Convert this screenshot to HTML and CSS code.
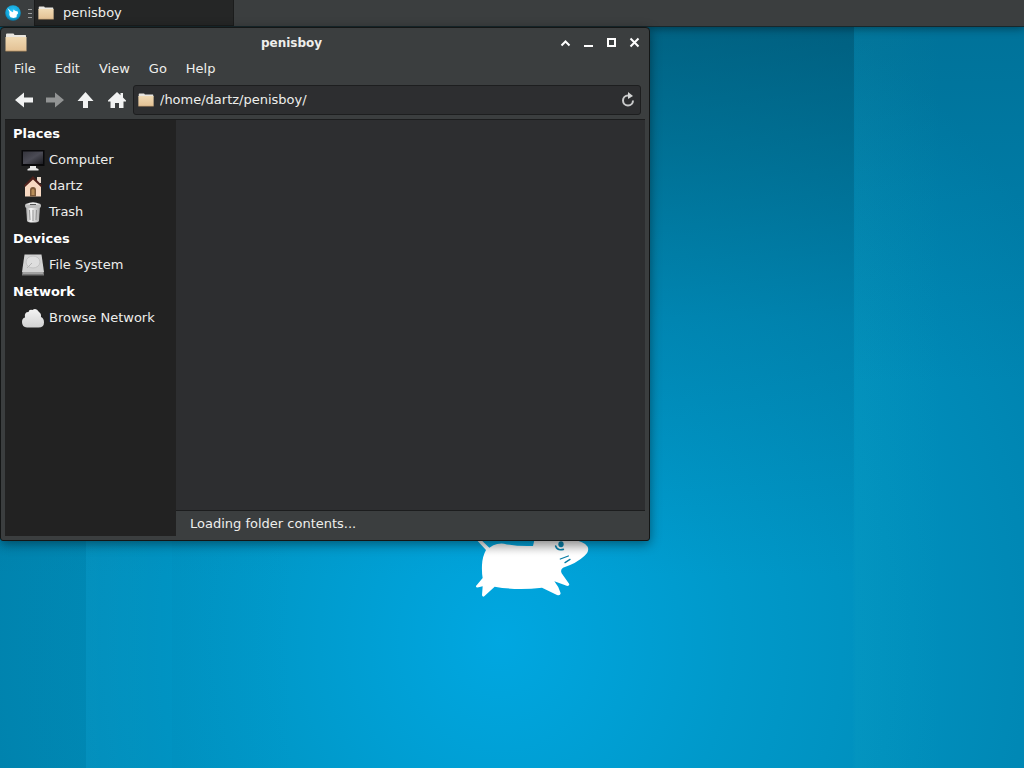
FILE: index.html
```
<!DOCTYPE html>
<html lang="en">
<head>
<meta charset="utf-8">
<meta name="viewport" content="width=device-width, initial-scale=1">
<title>penisboy</title>
<link rel="stylesheet" href="styles.css">
</head>
<body>
<svg class="defs" aria-hidden="true">
  <defs>
    <linearGradient id="tan" x1="0" y1="0" x2="0" y2="1"><stop offset="0" stop-color="#f0dab4"/><stop offset="1" stop-color="#e3c194"/></linearGradient>
    <linearGradient id="metal" x1="0" y1="0" x2="1" y2="0"><stop offset="0" stop-color="#a5a5a5"/><stop offset=".35" stop-color="#f6f6f6"/><stop offset="1" stop-color="#a9a9a9"/></linearGradient>
    <linearGradient id="screen" x1="0" y1="0" x2="1" y2="1"><stop offset="0" stop-color="#34343c"/><stop offset=".5" stop-color="#4b4b55"/><stop offset="1" stop-color="#1d1d22"/></linearGradient>
    <linearGradient id="cloud" x1="0" y1="0" x2="0" y2="1"><stop offset="0" stop-color="#f4f4f4"/><stop offset="1" stop-color="#d2d2d2"/></linearGradient>
    <linearGradient id="body" x1="0" y1="0" x2="0" y2="1"><stop offset="0" stop-color="#dcdcdc"/><stop offset=".3" stop-color="#fff"/></linearGradient>
    <radialGradient id="ball" cx=".5" cy=".4" r=".6"><stop offset="0" stop-color="#2fc8ff"/><stop offset=".7" stop-color="#13a6da"/><stop offset="1" stop-color="#0879a8"/></radialGradient>
    <symbol id="folder" viewBox="0 0 22 19">
      <path d="M1 5V1.500Q1 .5 2 .5H8Q9 .5 9.300 1.500V2H20.500Q21 2 21 3V5Z" fill="#e9e6e0"/>
      <path d="M.5 4H21.500V18H.5Z" fill="url(#tan)"/>
      <path d="M.5 18.200H21.500" stroke="#9b7c55" stroke-width=".8"/>
    </symbol>
  </defs>
</svg>

<header class="panel">
  <button class="menu-button" aria-label="Applications">
    <svg width="16" height="16" viewBox="0 0 16 16"><circle cx="8" cy="8" r="7.800" fill="url(#ball)"/><path d="M2.500 3L6 6.300 8 7.200 8.500 4.500 10 5.800 12.800 6.500 13 8.500 11.800 9.800 11.500 12.300 8.500 13 5.500 12.300 4.300 10 4.500 7Z" fill="#fff"/></svg>
  </button>
  <svg class="handle" width="4" height="9" viewBox="0 0 4 9" aria-hidden="true"><path d="M0 .5H4M0 4.500H4M0 8.500H4" stroke="#9a9c9c"/></svg>
  <button class="task"><svg width="16" height="14" viewBox="0 0 22 19"><use href="#folder"/></svg><span>penisboy</span></button>
</header>

<main class="desktop">
  <svg class="mouse" width="114" height="61" viewBox="45 111 342 183" aria-hidden="true">
    <path fill="url(#body)" d="M53 123L78 150Q67 170 66 195Q65 218 68 234L48 258Q46 266 68 259L66 286Q69 294 76 286L104 260Q170 272 246 263L291 285Q301 288 302 280Q298 262 283 244L322 258Q332 256 325 248L305 220Q300 210 309 203Q350 190 373 168Q389 154 383 140Q370 123 340 120L310 112H225L219 138Q170 140 132 131Q114 129 100 136L88 143L66 122Z"/>
    <g fill="none" stroke="#087da5" stroke-linecap="round"><path d="M287 138Q292 153 310 148" stroke-width="5"/><path d="M301 177L325 168M315 188L330 178" stroke-width="4"/></g>
    <ellipse cx="303" cy="133" rx="8" ry="9" fill="#087da5"/>
  </svg>

  <section class="window" aria-label="penisboy">
    <div class="titlebar">
      <svg width="22" height="19" viewBox="0 0 22 19"><use href="#folder"/></svg>
      <h1 class="title">penisboy</h1>
      <div class="controls">
        <button aria-label="Roll up"><svg width="11" height="11" viewBox="0 0 11 11"><path d="M1.500 8.500L5.500 4.500 9.500 8.500" fill="none" stroke="#fff" stroke-width="2"/></svg></button>
        <button aria-label="Minimize"><svg width="11" height="11" viewBox="0 0 11 11"><path d="M1 9H10" stroke="#fff" stroke-width="2"/></svg></button>
        <button aria-label="Maximize"><svg width="11" height="11" viewBox="0 0 11 11"><path d="M2 2H9V9H2Z" fill="none" stroke="#fff" stroke-width="2"/></svg></button>
        <button aria-label="Close"><svg width="11" height="11" viewBox="0 0 11 11"><path d="M1.500 1.500L9.500 9.500M9.500 1.500L1.500 9.500" stroke="#fff" stroke-width="2"/></svg></button>
      </div>
    </div>
    <nav class="menubar">
      <button>File</button><button>Edit</button><button>View</button><button>Go</button><button>Help</button>
    </nav>
    <div class="toolbar">
      <button aria-label="Back"><svg width="20" height="18" viewBox="0 0 20 18"><path d="M1 9L10 1.500V6.500H19V11.500H10V16.500Z" fill="#f1f2f2"/></svg></button>
      <button aria-label="Forward" disabled><svg width="20" height="18" viewBox="0 0 20 18"><path d="M19 9L10 1.500V6.500H1V11.500H10V16.500Z" fill="#929494"/></svg></button>
      <button aria-label="Up"><svg width="20" height="18" viewBox="0 0 20 18"><path d="M9.500 1L17.500 10H12V17H7V10H1.500Z" fill="#f1f2f2"/></svg></button>
      <button aria-label="Home"><svg width="20" height="18" viewBox="0 0 20 18"><path d="M10 1L13.500 4.300V2H16V6.600L19 9.500V10.500H16.500V17H12V12H8V17H3.500V10.500H1V9.500Z" fill="#f1f2f2"/></svg></button>
      <div class="location">
        <svg width="16" height="14" viewBox="0 0 22 19"><use href="#folder"/></svg>
        <input type="text" value="/home/dartz/penisboy/" aria-label="Location">
        <button aria-label="Reload"><svg width="14" height="16" viewBox="0 0 14 16"><path d="M12 8.500A5 5 0 1 1 7 3.500H9" fill="none" stroke="#c9caca" stroke-width="2"/><path d="M7 0L12 4 7 7Z" fill="#d4d5d5"/></svg></button>
      </div>
    </div>
    <div class="content">
      <aside class="sidebar">
        <h2>Places</h2>
        <a href="#computer"><svg width="24" height="22" viewBox="0 0 24 22"><path d="M.5 1H23.500V17H.5Z" fill="#09090b"/><path d="M2 2.500H22V15H2Z" fill="url(#screen)"/><path d="M9 17H15V19L17.500 20V21.500H6.500V20L9 19Z" fill="#e8e8e8"/></svg>Computer</a>
        <a href="#dartz"><svg width="24" height="22" viewBox="0 0 24 22"><path d="M16 2H20V8H16Z" fill="#ead9cb"/><path d="M4 10L12 3 20 10V21.500H4Z" fill="#f8d9c2"/><path d="M12 1L21 10.500 20 12 12 4.500 4 12 3 10.500Z" fill="#4e211c"/><path d="M9 21.500V15Q9 12 12 12T15 15V21.500Z" fill="#7d5a3a"/><path d="M10.500 20V15.500Q10.500 14 12 14T13.500 15.500V20Z" fill="#b88d58"/></svg>dartz</a>
        <a href="#trash"><svg width="24" height="22" viewBox="0 0 24 22"><path d="M5 5H19L18 20Q17 21.500 12 21.500T6 20Z" fill="url(#metal)"/><path d="M8.500 9L9 19M12 9V20M15.500 9L15 19" stroke="#929292" stroke-width="1"/><rect x="4" y="2.500" width="16" height="4.500" rx="2" fill="#bdbdbd"/><path d="M5 3.500Q12-1 19 3.500Z" fill="#ededed"/><path d="M9 3.500H15" stroke="#555"/></svg>Trash</a>
        <h2>Devices</h2>
        <a href="#file-system"><svg width="24" height="22" viewBox="0 0 24 22"><path d="M3.500 .5H20.500L23 18H1Z" fill="#d2d2d2"/><path d="M1 18H23V21.500H1Z" fill="#777"/><path d="M2 19H22" stroke="#ccc"/><ellipse cx="12" cy="8" rx="7" ry="6" fill="#dedede" stroke="#c2c2c2"/><path d="M11 9L6 14" stroke="#b5b5b5"/></svg>File System</a>
        <h2>Network</h2>
        <a href="#network"><svg width="24" height="22" viewBox="0 0 24 22"><path d="M6 20.500Q1 20 1 15Q1 11 4 10.500Q3 5 7.500 5Q8 2 11.500 3Q15 0 18 5Q20.500 6.500 20 10Q23 11 23 15.500Q23 20.500 17.500 20.500Z" fill="url(#cloud)"/></svg>Browse Network</a>
      </aside>
      <div class="view">
        <div class="files"></div>
        <footer class="status" role="status">Loading folder contents...</footer>
      </div>
    </div>
  </section>
</main>
</body>
</html>
```
FILE: styles.css
```
* { box-sizing: border-box; }
body {
  margin: 0;
  min-height: 100vh;
  display: flex;
  flex-direction: column;
  font: 13px/18px "DejaVu Sans", sans-serif;
  color: #eeeeec;
  background:
    linear-gradient(90deg, #00648428 0 86px, #ffffff04 86px, #ffffff00 172px, #005c8008 172px, #005c8000 300px) no-repeat,
    linear-gradient(#002c3a68, #00465c60 20%, #005c8040 42%, #005c8000 75%) 0 0 / 854px 100% no-repeat,
    linear-gradient(#003c5038, #00506c20 25%, #005c8000 50%) 854px 0 / 100% 100% no-repeat,
    linear-gradient(90deg, #30c0c000, #30c0c010 4px, #30c0c000 90px) 852px 0 / 90px 100% no-repeat,
    radial-gradient(ellipse 660px 720px at 500px 640px, #00a7e1, #0099ca 35%, #0090be 60%, #0080ac);
}
button, input { font: inherit; color: inherit; background: none; border: 0; margin: 0; padding: 0; }
svg { display: block; flex: none; }
.defs { position: absolute; width: 0; height: 0; }

.panel {
  display: flex;
  align-items: center;
  height: 27px;
  padding-left: 5px;
  background: #3b3e3f;
  border-bottom: 1px solid #17282d;
  box-shadow: 0 2px 8px #00000060;
}
.handle { margin: 0 2px 0 7px; }
.task {
  display: flex;
  align-items: center;
  gap: 9px;
  width: 200px;
  height: 26px;
  padding-left: 3px;
  background: #252626;
  border: 1px solid #1b1c1c;
  border-top: 0;
}

.desktop { position: relative; flex: 1; }
.mouse { position: absolute; left: 475px; top: 510px; }
.window {
  position: relative;
  width: 650px;
  max-width: 100%;
  padding: 0 4px 4px;
  background: #3b3e3f;
  border: 1px solid #141616;
  border-radius: 4px 4px 3px 3px;
  box-shadow: 0 3px 12px #00000070;
}
.titlebar { display: flex; align-items: center; height: 28px; }
.title { flex: 1; margin: 0; padding: 2px 4px 0 0; font-size: 12px; line-height: 18px; font-weight: bold; text-align: center; }
.controls { display: flex; gap: 12px; padding-right: 5px; }
.menubar { display: flex; gap: 19px; height: 26px; padding: 0 9px; }
.toolbar { display: flex; align-items: center; gap: 11px; height: 37px; padding: 0 4px 1px 9px; }
.location {
  flex: 1;
  display: flex;
  align-items: center;
  gap: 6px;
  height: 30px;
  margin-left: -5px;
  padding: 0 5px 0 4px;
  background: #2d2e30;
  border: 1px solid #1d1e1f;
  border-radius: 3px;
}
.location input { flex: 1; min-width: 0; outline: 0; }

.content { display: flex; min-height: 417px; border-top: 1px solid #1c1d1e; }
.sidebar { width: 171px; padding: 0 8px; background: #222; }
.sidebar h2 { margin: 0; padding-top: 4px; height: 27px; font-size: 13px; line-height: 20px; font-weight: bold; color: #fff; }
.sidebar a {
  display: flex;
  align-items: center;
  gap: 4px;
  height: 26px;
  padding-left: 8px;
  color: inherit;
  text-decoration: none;
  white-space: nowrap;
}
.view { flex: 1; display: flex; flex-direction: column; }
.files { flex: 1; background: #2d2e30; }
.status { height: 26px; padding: 4px 14px; border-top: 1px solid #1c1d1e; line-height: 18px; }
```
